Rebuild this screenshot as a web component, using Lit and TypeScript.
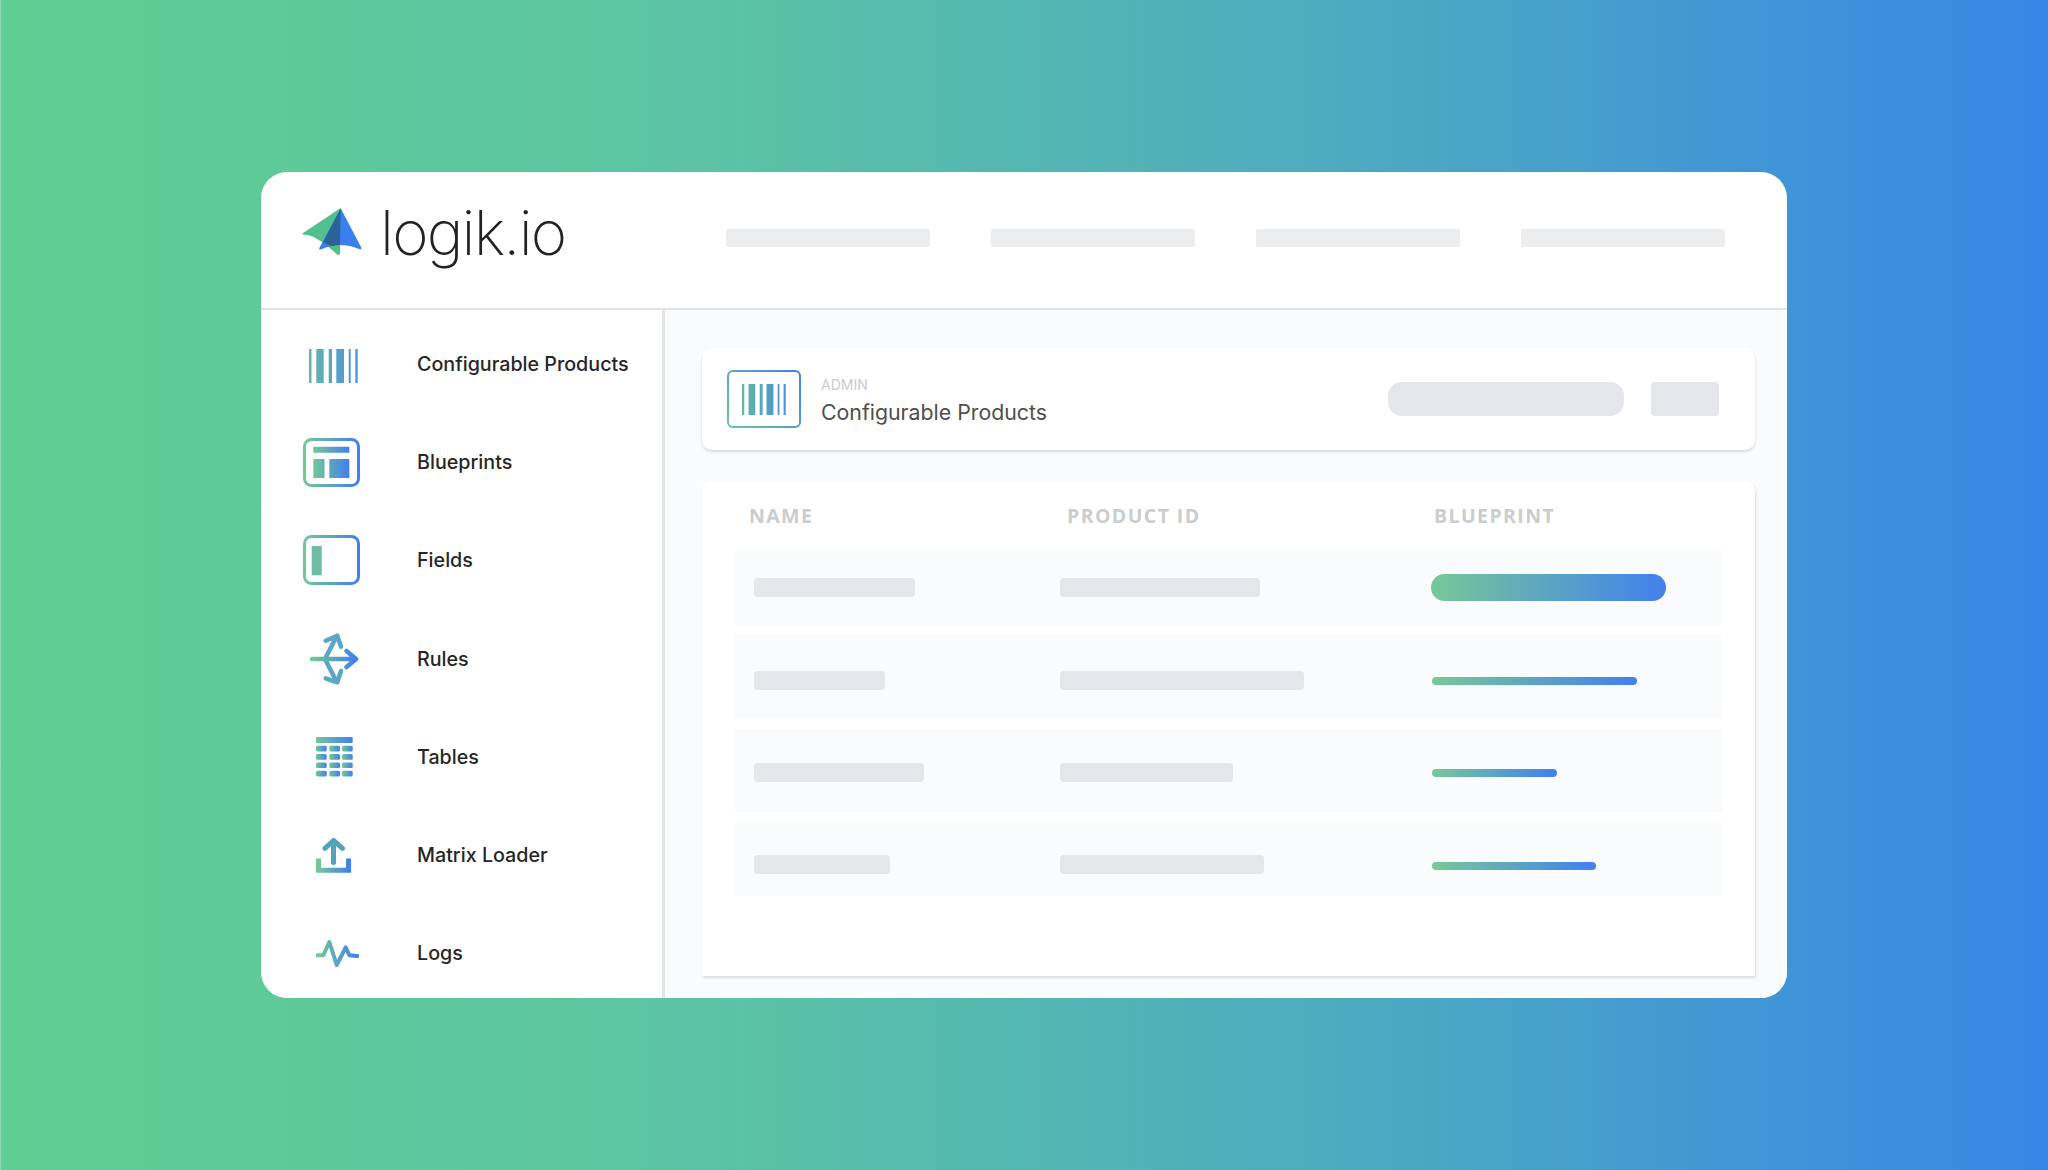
import { LitElement, html, css, svg } from "lit";
import { customElement } from "lit/decorators.js";

const defs = (id: string, from = "#74c797", to = "#4180ee") => svg`<defs><linearGradient id=${id} x1="0" y1="0" x2="1" y2="0"><stop offset="0" stop-color=${from}/><stop offset="1" stop-color=${to}/></linearGradient></defs>`;

const barcode = (id: string, w: number, h: number, from: string, to: string) => html`<svg class="bc" style="width:${w}px;height:${h}px" viewBox="0 0 49 34" preserveAspectRatio="none">${defs(id, from, to)}
  <path fill="url(#${id})" d="M0 0h2.500v34H0zM7.300 0h7.400v34H7.300zM19.700 0h3.300v34h-3.300zM27.300 0h7.700v34h-7.700zM39.700 0h2v34h-2zM46.300 0h2.400v34h-2.400z"/></svg>`;

const icons: Record<string, any> = {
  products: barcode("g1", 49, 34, "#66b4a8", "#4e93de"),
  blueprints: html`<svg width="57" height="49" viewBox="0 0 57 49">${defs("g2")}
    <rect x="1.500" y="1.500" width="54" height="46" rx="7" fill="none" stroke="url(#g2)" stroke-width="3"/>
    <path fill="url(#g2)" d="M10.300 8.700h36v6h-36zM10.300 21h11.200v19H10.300zM26.300 21h20v19h-20z"/></svg>`,
  fields: html`<svg width="57" height="50" viewBox="0 0 57 50">${defs("g3")}
    <rect x="1.500" y="1.500" width="54" height="47" rx="7" fill="none" stroke="url(#g3)" stroke-width="3"/>
    <path fill="#6ebba7" d="M8.700 11h10v29.300h-10z"/></svg>`,
  rules: html`<svg width="54" height="54" viewBox="0 0 54 54">${defs("g4")}
    <g fill="none" stroke-width="4.500" stroke-linecap="round" stroke-linejoin="round">
      <path stroke="#5aa6c6" d="M20 27 31.500 4.500M20.700 8.700l11.600-5 3.700 11M20 27l11.500 22.500M20.700 46.300l11.600 4 3.700-11.300"/>
      <path stroke="url(#g4)" d="M7 27h44M41.500 19l9.500 8-9.500 8"/>
    </g></svg>`,
  tables: html`<svg width="37" height="40" viewBox="0 0 37 40">${defs("g5")}
    <g fill="url(#g5)">
      <rect width="36.700" height="6" rx="1"/>
      ${[8.7, 17, 25.4, 33.7].map(y => svg`
        <rect y=${y} width="10.700" height="5.700" rx="1.500"/>
        <rect x="13.300" y=${y} width="10.700" height="5.700" rx="1.500"/>
        <rect x="26" y=${y} width="10.700" height="5.700" rx="1.500"/>`)}
    </g></svg>`,
  loader: html`<svg width="35" height="35" viewBox="0 0 35 35">${defs("g6")}
    <path fill="none" stroke="url(#g6)" stroke-width="5" d="M2.500 20.500v11.800h30V20.500"/>
    <path fill="none" stroke="#55a2b6" stroke-width="5" stroke-linecap="round" stroke-linejoin="round" d="M17.500 24.500V3M9 10.300 17.500 2.500l9 7.800"/></svg>`,
  logs: html`<svg width="43" height="27" viewBox="0 0 43 27">${defs("g7")}
    <path fill="none" stroke="url(#g7)" stroke-width="4" stroke-linecap="round" stroke-linejoin="round" d="M1.500 15.300h5.800L13.300 2l7.400 23 9-17.700 3.600 8 8 .7"/></svg>`,
};

const nav = [
  ["Configurable Products", "products"],
  ["Blueprints", "blueprints"],
  ["Fields", "fields"],
  ["Rules", "rules"],
  ["Tables", "tables"],
  ["Matrix Loader", "loader"],
  ["Logs", "logs"],
];

const rows = [
  { a: 161, b: 200, c: 235, big: true, h: 75, pt: 0 },
  { a: 131, b: 244, c: 205, big: false, h: 83, pt: 7 },
  { a: 170, b: 173, c: 125, big: false, h: 83, pt: 4 },
  { a: 136, b: 204, c: 164, big: false, h: 74, pt: 12 },
];

@customElement("app-root")
export class AppRoot extends LitElement {
  static styles = css`
    :host {
      display: block;
      width: 2048px;
      height: 1170px;
      font-family: Inter, "Liberation Sans", sans-serif;
    }
    .page {
      box-sizing: border-box;
      height: 1170px;
      padding: 172px 261px 172px 260px;
      border-left: 1px solid #8ddbb4;
      background: linear-gradient(90deg, #5fce92 0%, #5bc3a4 35%, #4aa7c4 70%, #3886e6 100%);
    }
    .window {
      height: 826px;
      background: #fff;
      border-radius: 26px;
      overflow: hidden;
      display: flex;
      flex-direction: column;
    }
    .top {
      box-sizing: border-box;
      height: 138px;
      flex: none;
      display: flex;
      align-items: center;
      border-bottom: 2px solid #e0e2e4;
      padding: 0 62px 0 41px;
    }
    .brand {
      width: 424px;
      display: flex;
      align-items: center;
      gap: 18px;
      flex: none;
    }
    .brand svg { margin-bottom: 16px; flex: none; }
    .wordmark {
      font-size: 62px;
      font-weight: 150;
      letter-spacing: -1.800px;
      line-height: 1;
      color: #222;
      margin-top: -14px;
    }
    .topbars { flex: 1; display: flex; justify-content: space-between; margin-bottom: 4px; }
    .topbars i { display: block; width: 204px; height: 18px; border-radius: 2px; background: #ecedef; }
    .body { flex: 1; display: flex; min-height: 0; }
    .side {
      box-sizing: border-box;
      width: 404px;
      flex: none;
      border-right: 3px solid #e2e4e6;
      display: flex;
      flex-direction: column;
      padding: 5px 0 0 42px;
    }
    .item { height: 98.200px; display: flex; align-items: center; flex: none; }
    .ic { box-sizing: border-box; width: 114px; flex: none; display: flex; }
    .ic.products { padding: 4px 0 0 6px; }
    .ic.rules { padding-left: 2px; }
    .ic.tables, .ic.loader, .ic.logs { padding-left: 13px; }
    .lbl { font-size: 19.700px; font-weight: 500; color: #262626; white-space: nowrap; }
    .main {
      flex: 1;
      background: #fafbfc;
      box-sizing: border-box;
      padding: 38px 32px 22px 37px;
      display: flex;
      flex-direction: column;
      gap: 31px;
      min-width: 0;
    }
    .head {
      height: 102px;
      flex: none;
      box-sizing: border-box;
      background: #fff;
      border-radius: 10px;
      box-shadow: 0 2px 3px rgba(0,0,0,.14);
      display: flex;
      align-items: center;
      padding: 0 36px 0 25px;
    }
    .badge {
      box-sizing: border-box;
      width: 74px;
      height: 58px;
      border-radius: 6px;
      flex: none;
      display: flex;
      align-items: center;
      justify-content: center;
      border: 2px solid transparent;
      background: linear-gradient(#fff,#fff) padding-box, linear-gradient(45deg,#6fc89a,#4180ee) border-box;
    }
    .titles { margin-left: 20px; flex: 1; padding-top: 5px; }
    .admin { font-size: 14px; color: #c9cbce; line-height: 18px; }
    .title { font-size: 21.300px; font-weight: 400; color: #4e4e4e; line-height: 30px; margin-top: 3px; }
    .search { width: 236px; height: 34px; border-radius: 14px; background: #e5e6e9; }
    .btn { width: 68px; height: 34px; border-radius: 4px; background: #e5e6e9; margin-left: 27px; }
    .table {
      flex: 1;
      background: #fff;
      border-radius: 10px 10px 0 0;
      box-shadow: 1px 2px 3px rgba(0,0,0,.13);
      box-sizing: border-box;
      padding: 0 33px;
      display: flex;
      flex-direction: column;
    }
    .ths {
      height: 69px;
      flex: none;
      display: grid;
      grid-template-columns: 318px 367px 1fr;
      padding-left: 14px;
      align-items: center;
      font-family: "Open Sans", sans-serif;
      font-weight: 700;
      font-size: 19.500px;
      letter-spacing: 1.400px;
      color: #cbcccf;
    }
    .rows { display: flex; flex-direction: column; gap: 10.300px; }
    .row {
      box-sizing: border-box;
      background: #fafbfc;
      display: grid;
      grid-template-columns: 306px 372px 1fr;
      padding-left: 19px;
      align-items: center;
      flex: none;
    }
    .sk { height: 19px; border-radius: 4px; background: #e5e6e9; }
    .grad { background: linear-gradient(90deg, #77c898, #4180ee); height: 8px; border-radius: 4px; margin-top: 2px; }
    .grad.big { height: 27px; border-radius: 13.500px; margin: 0 0 0 -1px; }
  `;

  render() {
    return html`<div class="page"><div class="window">
      <div class="top">
        <div class="brand">
          <svg width="60" height="48" viewBox="0 0 60 48" aria-hidden="true">
            <path fill="#52c08d" d="M.7 25.300 37.500.8Q39 0 39 2L38 45.300Q37 48 35.700 47L28 40.300Q20 33 11.300 28.700 6 26.500.7 26.500Z"/>
            <path fill="#3a7ff0" d="M38.700.3 59.500 40Q59.500 42 57 41 48 37 38 37 28 37 19 41.500 16.500 42 17.300 40Z"/>
            <path fill="#2a6496" d="M38.700.3 21 34.300 30 38.200Q34 37 38 37Z"/>
          </svg>
          <span class="wordmark">logik.io</span>
        </div>
        <div class="topbars"><i></i><i></i><i></i><i></i></div>
      </div>
      <div class="body">
        <nav class="side">
          ${nav.map(([t, k]) => html`<div class="item"><span class="ic ${k}">${icons[k]}</span><span class="lbl">${t}</span></div>`)}
        </nav>
        <div class="main">
          <div class="head">
            <div class="badge">${barcode("g8", 44, 31, "#62b89f", "#4b8fe2")}</div>
            <div class="titles"><div class="admin">ADMIN</div><div class="title">Configurable Products</div></div>
            <div class="search"></div><div class="btn"></div>
          </div>
          <div class="table">
            <div class="ths"><span>NAME</span><span>PRODUCT ID</span><span>BLUEPRINT</span></div>
            <div class="rows">
              ${rows.map(r => html`<div class="row" style="height:${r.h}px;padding-top:${r.pt}px">
                <div class="sk" style="width:${r.a}px"></div>
                <div class="sk" style="width:${r.b}px"></div>
                <div class="grad ${r.big ? "big" : ""}" style="width:${r.c}px"></div>
              </div>`)}
            </div>
          </div>
        </div>
      </div>
    </div></div>`;
  }
}
